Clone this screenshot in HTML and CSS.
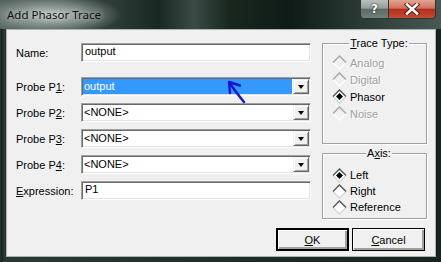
FILE: index.html
```html
<!DOCTYPE html>
<html lang="en">

<head>
    <meta charset="UTF-8">
    <title>Add Phasor Trace</title>
    <link rel="stylesheet" href="styles.css">
</head>

<body>
    <div class="window">
        <div class="titlebar">
            <span class="title">Add Phasor Trace</span>
            <div class="caption-buttons">
                <span class="cap-help">?</span>
                <span class="cap-close">
                    <svg width="16" height="12" viewBox="0 0 16 12">
                        <path d="M3 1.5 L13 10.5 M13 1.5 L3 10.5" stroke="#4a1a12" stroke-width="4.4" stroke-linecap="square"/>
                        <path d="M3 1.5 L13 10.5 M13 1.5 L3 10.5" stroke="#ffffff" stroke-width="2.6" stroke-linecap="square"/>
                    </svg>
                </span>
            </div>
        </div>

        <div class="client">
            <div class="main">
                <div class="form">
                    <div class="row row-name">
                        <label>Name:</label>
                        <div class="field">output</div>
                    </div>
                    <div class="row">
                        <label>Probe P<u>1</u>:</label>
                        <div class="field combo">
                            <span class="combo-text selected">output</span>
                            <span class="drop"></span>
                        </div>
                    </div>
                    <div class="row">
                        <label>Probe P<u>2</u>:</label>
                        <div class="field combo">
                            <span class="combo-text">&lt;NONE&gt;</span>
                            <span class="drop"></span>
                        </div>
                    </div>
                    <div class="row">
                        <label>Probe P<u>3</u>:</label>
                        <div class="field combo">
                            <span class="combo-text">&lt;NONE&gt;</span>
                            <span class="drop"></span>
                        </div>
                    </div>
                    <div class="row">
                        <label>Probe P<u>4</u>:</label>
                        <div class="field combo">
                            <span class="combo-text">&lt;NONE&gt;</span>
                            <span class="drop"></span>
                        </div>
                    </div>
                    <div class="row">
                        <label><u>E</u>xpression:</label>
                        <div class="field">P1</div>
                    </div>
                </div>

                <div class="side">
                    <fieldset class="group trace-type">
                        <legend><u>T</u>race Type:</legend>
                        <div class="radio disabled">
                            <svg class="diamond" width="15" height="15" viewBox="0 0 15 15"><path class="d-lo" d="M1 7.5 L7.5 14 L14 7.5"/><path class="d-up" d="M1 7.5 L7.5 1 L14 7.5"/></svg>
                            <span>Analog</span>
                        </div>
                        <div class="radio disabled">
                            <svg class="diamond" width="15" height="15" viewBox="0 0 15 15"><path class="d-lo" d="M1 7.5 L7.5 14 L14 7.5"/><path class="d-up" d="M1 7.5 L7.5 1 L14 7.5"/></svg>
                            <span>Digital</span>
                        </div>
                        <div class="radio">
                            <svg class="diamond" width="15" height="15" viewBox="0 0 15 15"><polygon class="d-fill" points="7.5,1 14,7.5 7.5,14 1,7.5"/><path class="d-lo" d="M1 7.5 L7.5 14 L14 7.5"/><path class="d-up" d="M1 7.5 L7.5 1 L14 7.5"/><polygon class="d-dot" points="7.5,4 11,7.5 7.5,11 4,7.5"/></svg>
                            <span>Phasor</span>
                        </div>
                        <div class="radio disabled">
                            <svg class="diamond" width="15" height="15" viewBox="0 0 15 15"><path class="d-lo" d="M1 7.5 L7.5 14 L14 7.5"/><path class="d-up" d="M1 7.5 L7.5 1 L14 7.5"/></svg>
                            <span>Noise</span>
                        </div>
                    </fieldset>

                    <fieldset class="group axis">
                        <legend>A<u>x</u>is:</legend>
                        <div class="radio">
                            <svg class="diamond" width="15" height="15" viewBox="0 0 15 15"><polygon class="d-fill" points="7.5,1 14,7.5 7.5,14 1,7.5"/><path class="d-lo" d="M1 7.5 L7.5 14 L14 7.5"/><path class="d-up" d="M1 7.5 L7.5 1 L14 7.5"/><polygon class="d-dot" points="7.5,4 11,7.5 7.5,11 4,7.5"/></svg>
                            <span>Left</span>
                        </div>
                        <div class="radio">
                            <svg class="diamond" width="15" height="15" viewBox="0 0 15 15"><polygon class="d-fill" points="7.5,1 14,7.5 7.5,14 1,7.5"/><path class="d-lo" d="M1 7.5 L7.5 14 L14 7.5"/><path class="d-up" d="M1 7.5 L7.5 1 L14 7.5"/></svg>
                            <span>Right</span>
                        </div>
                        <div class="radio">
                            <svg class="diamond" width="15" height="15" viewBox="0 0 15 15"><polygon class="d-fill" points="7.5,1 14,7.5 7.5,14 1,7.5"/><path class="d-lo" d="M1 7.5 L7.5 14 L14 7.5"/><path class="d-up" d="M1 7.5 L7.5 1 L14 7.5"/></svg>
                            <span>Reference</span>
                        </div>
                    </fieldset>
                </div>
            </div>

            <div class="buttons">
                <button class="btn btn-default"><u>O</u>K</button>
                <button class="btn"><u>C</u>ancel</button>
            </div>
        </div>

        <!-- hand drawn pointer over the P1 combo -->
        <svg class="pointer" width="24" height="28" viewBox="0 0 24 28">
            <path d="M4 4 L15 7.5 M4 4 L5 15 M4 4 Q10 13 19 24" fill="none" stroke="#1414d2" stroke-width="2.4" stroke-linecap="round"/>
        </svg>
    </div>
</body>

</html>
```

FILE: styles.css
```css
body {
    margin: 0;
    padding: 0;
    font-family: "Liberation Sans", Arial, sans-serif;
    font-size: 11px;
    background-color: #16231f;
}

.window {
    position: relative;
    width: 441px;
    height: 262px;
    box-sizing: border-box;
    padding: 0 5px 5px 6px;
    display: flex;
    flex-direction: column;
    background: linear-gradient(90deg, #24332e 0, #18261f 2px, #2a3934 4px, #16231f 100%);
}

/* glass title bar */
.titlebar {
    height: 29px;
    margin: 0 -5px 0 -6px;
    padding: 0 5px 0 7px;
    display: flex;
    align-items: flex-start;
    background:
        radial-gradient(ellipse 70px 20px at 52px 15px, rgba(196, 206, 201, 0.95), rgba(196, 206, 201, 0)),
        linear-gradient(90deg, #55645f 0, #34433e 22%, #1a2824 36%, #3a4a45 44%, #19271f 52%, #0f1b17 66%, #283732 80%, #4a5853 100%);
}

.title {
    font-family: "Noto Sans", "Open Sans", sans-serif;
    font-size: 11.5px;
    line-height: 29px;
    color: #111;
    text-shadow: 0 0 6px rgba(255, 255, 255, 0.7);
}

.caption-buttons {
    margin-left: auto;
    display: flex;
}

.cap-help,
.cap-close {
    height: 19px;
    box-sizing: border-box;
    border: 1px solid #2b3833;
    border-top: none;
    display: flex;
    align-items: center;
    justify-content: center;
    color: white;
}

.cap-help {
    width: 28px;
    border-radius: 0 0 0 4px;
    border-right: none;
    font-family: "DejaVu Sans", sans-serif;
    font-weight: bold;
    font-size: 12px;
    text-shadow: 0 0 2px #222, 0 0 1px #222;
    background: linear-gradient(#b7c1bd 0, #94a09c 45%, #5d6a66 52%, #72807b 100%);
}

.cap-close {
    width: 48px;
    border-radius: 0 0 4px 0;
    background: linear-gradient(#e2a394 0, #d0725e 45%, #b5301c 52%, #c54a33 100%);
}

/* dialog area */
.client {
    flex: 1;
    background-color: #f0f0f0;
    border: 1px solid #a9b3af;
    display: flex;
    flex-direction: column;
}

.main {
    display: flex;
    padding: 7px 7px 0 9px;
}

.form {
    width: 295px;
    margin-top: 6px;
}

.row {
    display: flex;
    align-items: center;
    height: 19px;
    margin-bottom: 7px;
}

.row-name {
    margin-bottom: 15px;
}

.row label {
    width: 65px;
    color: #000;
}

.field {
    position: relative;
    width: 230px;
    height: 19px;
    box-sizing: border-box;
    padding-left: 3px;
    line-height: 15px;
    background-color: white;
    border-top: 1px solid #a0a0a0;
    border-left: 1px solid #a0a0a0;
    border-bottom: 1px solid #ffffff;
    border-right: 1px solid #ffffff;
    box-shadow: inset 1px 1px #696969, inset -1px -1px #e3e3e3;
}

.combo {
    display: flex;
    padding: 1px;
}

.combo-text {
    flex: 1;
    padding-left: 1px;
    margin-right: 1px;
    line-height: 15px;
}

.combo-text.selected {
    background-color: #3399ff;
    color: white;
}

.drop {
    width: 16px;
    height: 15px;
    box-sizing: border-box;
    background-color: #f0f0f0;
    border-top: 1px solid #f0f0f0;
    border-left: 1px solid #f0f0f0;
    border-bottom: 1px solid #696969;
    border-right: 1px solid #696969;
    box-shadow: inset 1px 1px #ffffff, inset -1px -1px #a0a0a0;
    display: flex;
    align-items: center;
    justify-content: center;
}

.drop::after {
    content: "";
    border-left: 3.5px solid transparent;
    border-right: 3.5px solid transparent;
    border-top: 4px solid #000;
}

/* group boxes on the right */
.side {
    width: 105px;
    margin-left: 11px;
}

.group {
    margin: 0;
    padding: 0 0 0 9px;
    border: 1px solid #a0a0a0;
    box-shadow: inset 1px 1px #ffffff, 1px 1px #ffffff;
    box-sizing: border-box;
}

.group legend {
    margin: 0 auto;
    padding: 0 1px;
    line-height: 13px;
    background-color: #f0f0f0;
}

.trace-type {
    height: 107px;
    padding-top: 4px;
}

.trace-type .radio {
    height: 17px;
}

.axis {
    height: 72px;
    margin-top: 3px;
    padding-top: 7px;
}

.axis .radio {
    height: 16px;
}

.radio {
    display: flex;
    align-items: center;
    color: #000;
}

.radio span {
    margin-left: 3px;
}

.diamond {
    flex: none;
}

.diamond .d-up {
    fill: none;
    stroke: #5a5a5a;
    stroke-width: 1.5;
}

.diamond .d-lo {
    fill: none;
    stroke: #d8d8d8;
    stroke-width: 1.5;
}

.diamond .d-fill {
    fill: #ffffff;
}

.diamond .d-dot {
    fill: #000;
}

.radio.disabled {
    color: #a0a0a0;
    text-shadow: 1px 1px #ffffff;
}

.radio.disabled .d-up {
    stroke: #a8a8a8;
}

.radio.disabled .d-lo {
    stroke: #ffffff;
}

/* bottom buttons */
.buttons {
    display: flex;
    justify-content: flex-end;
    gap: 3px;
    margin-top: 9px;
    padding-right: 10px;
}

.btn {
    width: 73px;
    height: 23px;
    box-sizing: border-box;
    padding: 0;
    font-family: "Liberation Sans", Arial, sans-serif;
    font-size: 11px;
    color: #000;
    background-color: #f0f0f0;
    border: 1px solid #000;
    box-shadow: inset 1px 1px #ffffff, inset -1px -1px #a0a0a0, inset -2px -2px #a0a0a0;
}

.btn-default {
    border-width: 2px;
}

.pointer {
    position: absolute;
    left: 225px;
    top: 78px;
}
```
